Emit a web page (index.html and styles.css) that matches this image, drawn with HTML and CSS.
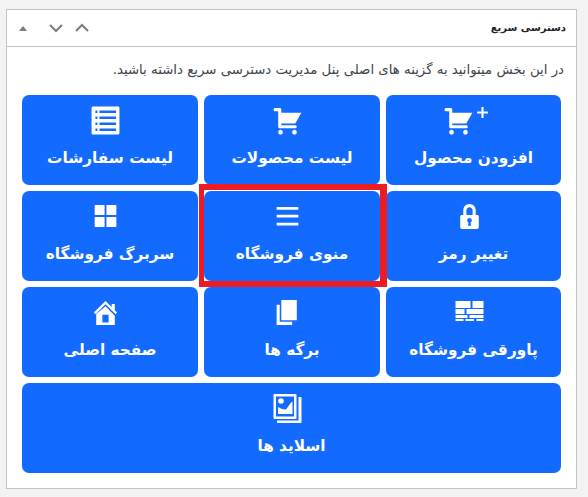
FILE: index.html
```html
<!DOCTYPE html>
<html lang="fa" dir="rtl">
<head>
    <meta charset="UTF-8">
    <meta name="viewport" content="width=device-width, initial-scale=1.0">
    <title>دسترسی سریع</title>
    <link rel="stylesheet" href="styles.css">
</head>
<body>
    <div class="panel">
        <div class="panel-head">
            <h2>دسترسی سریع</h2>
            <div class="handles">
                <svg class="h-up" width="16" height="16" viewBox="0 0 16 16"><path d="M2 11l6-6 6 6" fill="none" stroke="#787c82" stroke-width="2"/></svg>
                <svg class="h-down" width="16" height="16" viewBox="0 0 16 16"><path d="M2 5l6 6 6-6" fill="none" stroke="#787c82" stroke-width="2"/></svg>
                <svg class="h-top" width="10" height="16" viewBox="0 0 10 16"><path d="M1 11l4-5 4 5z" fill="#787c82"/></svg>
            </div>
        </div>
        <div class="panel-body">
            <p class="intro">در این بخش میتوانید به گزینه های اصلی پنل مدیریت دسترسی سریع داشته باشید.</p>
            <div class="links">
                <a class="link-card" href="#">
                    <span class="icon-wrap">
                        <svg class="icon" viewBox="0 0 20 20"><path d="M6 13h9c.55 0 1 .45 1 1s-.45 1-1 1H5c-.55 0-1-.45-1-1V4H2c-.55 0-1-.45-1-1s.45-1 1-1h3c.55 0 1 .45 1 1v2h13l-4 7H6v1zm-.5 3c.83 0 1.5.67 1.5 1.5S6.33 19 5.5 19 4 18.33 4 17.5 4.67 16 5.5 16zm9 0c.83 0 1.5.67 1.5 1.5s-.67 1.5-1.5 1.5-1.5-.67-1.5-1.5.67-1.5 1.5-1.5z"/></svg>
                        <svg class="plus" viewBox="0 0 12 12"><path d="M5 1h2v4h4v2H7v4H5V7H1V5h4z"/></svg>
                    </span>
                    <span class="label">افزودن محصول</span>
                </a>
                <a class="link-card" href="#">
                    <svg class="icon" viewBox="0 0 20 20"><path d="M6 13h9c.55 0 1 .45 1 1s-.45 1-1 1H5c-.55 0-1-.45-1-1V4H2c-.55 0-1-.45-1-1s.45-1 1-1h3c.55 0 1 .45 1 1v2h13l-4 7H6v1zm-.5 3c.83 0 1.5.67 1.5 1.5S6.33 19 5.5 19 4 18.33 4 17.5 4.67 16 5.5 16zm9 0c.83 0 1.5.67 1.5 1.5s-.67 1.5-1.5 1.5-1.5-.67-1.5-1.5.67-1.5 1.5-1.5z"/></svg>
                    <span class="label">لیست محصولات</span>
                </a>
                <a class="link-card" href="#">
                    <svg class="icon" viewBox="0 0 20 20"><path fill-rule="evenodd" d="M2 1h16c.6 0 1 .4 1 1v16c0 .6-.4 1-1 1H2c-.6 0-1-.4-1-1V2c0-.6.4-1 1-1zm1.500 2.500v1.600h1.300V3.500H3.500zm2.600 0v1.600h10.700V3.500H6.100zM3.500 7.400V9h1.300V7.400H3.500zm2.600 0V9h10.700V7.400H6.100zM3.500 11.300v1.600h1.300v-1.600H3.500zm2.600 0v1.600h10.700v-1.600H6.100zM3.500 15.100v1.600h1.300v-1.600H3.500zm2.600 0v1.600h10.700v-1.600H6.100z"/></svg>
                    <span class="label">لیست سفارشات</span>
                </a>
                <a class="link-card" href="#">
                    <svg class="icon" viewBox="0 0 20 20"><path d="M14 9h1c.55 0 1 .45 1 1v7c0 .55-.45 1-1 1H5c-.55 0-1-.45-1-1v-7c0-.55.45-1 1-1h1V6c0-2.210 1.790-4 4-4s4 1.790 4 4v3zm-2 0V6c0-1.100-.9-2-2-2s-2 .9-2 2v3h4zm-1 7l-.36-2.150c.51-.24.86-.75.86-1.350 0-.83-.67-1.500-1.500-1.500s-1.500.67-1.500 1.500c0 .6.35 1.110.86 1.350L9 16h2z"/></svg>
                    <span class="label">تغییر رمز</span>
                </a>
                <a class="link-card is-marked" href="#">
                    <svg class="icon" viewBox="0 0 20 20"><path d="M3 3.800h14v1.800H3zM3 8.900h14v1.800H3zM3 14h14v1.800H3z"/></svg>
                    <span class="label">منوی فروشگاه</span>
                    <i class="marker"></i>
                </a>
                <a class="link-card" href="#">
                    <svg class="icon" viewBox="0 0 20 20"><path d="M3 2.600h6.400V9H3zM10.600 2.600H17V9h-6.400zM3 10.400h6.400v6.400H3zM10.600 10.400H17v6.400h-6.400z"/></svg>
                    <span class="label">سربرگ فروشگاه</span>
                </a>
                <a class="link-card" href="#">
                    <svg class="icon" viewBox="0 0 31 31"><path d="M1.500 4h15v7h-15zM18.500 4h11v7h-11zM1.500 12h9v5h-9zM12.500 12h17v5h-17zM1.500 18h12v3h-12zM15.500 18h14v3h-14zM1.500 22h8v2h-8zM11.500 22H20v2h-8.500zM22.500 22h7v2h-7z"/></svg>
                    <span class="label">پاورقی فروشگاه</span>
                </a>
                <a class="link-card" href="#">
                    <svg class="icon" viewBox="0 0 20 20"><path d="M6 15V2h10v13H6zm-1 1h8v2H3V5h2v11z"/></svg>
                    <span class="label">برگه ها</span>
                </a>
                <a class="link-card" href="#">
                    <svg class="icon" viewBox="0 0 20 20"><path fill-rule="evenodd" d="M16 8.500l1.530 1.530-1.060 1.060L10 4.620l-6.470 6.470-1.060-1.060L10 2.500l4 4v-2h2v4zM10 6.040l6 5.990V18H4v-6.970zM12 16.500v-5H8v5h4z"/></svg>
                    <span class="label">صفحه اصلی</span>
                </a>
                <a class="link-card link-wide" href="#">
                    <svg class="icon" viewBox="0 0 31 31"><path fill-rule="evenodd" d="M2.500 1h21c.6 0 1 .4 1 1v23c0 .6-.4 1-1 1h-21c-.6 0-1-.4-1-1V2c0-.6.4-1 1-1zm1.500 2.500v20h18v-20H4zM6 21v-7l4 2 4 .5 5-7 1.500-1V21H6zm3-15.800a2.800 2.800 0 1 1 0 5.600 2.800 2.800 0 0 1 0-5.600zM26.500 4h2c.6 0 1 .4 1 1v24c0 .6-.4 1-1 1H6c-.6 0-1-.4-1-1v-1.500h21.500V4z"/></svg>
                    <span class="label">اسلاید ها</span>
                </a>
            </div>
        </div>
    </div>
</body>
</html>
```

FILE: styles.css
```css
* { margin: 0; padding: 0; box-sizing: border-box; }
body { background: #f3f3f3; padding: 9px 11px 0 6px; font-family: "DejaVu Sans", sans-serif; }
.panel { background: #fff; border: 1px solid #c3c4c7; height: 480px; }
.panel-head { height: 37px; border-bottom: 1px solid #c3c4c7; display: flex; align-items: center; justify-content: space-between; padding: 0 10px 0 11px; }
.panel-head h2 { font-size: 10px; font-weight: bold; color: #1d2327; margin-bottom: 2px; }
.handles { display: flex; align-items: center; gap: 10px; }
.handles svg { display: block; }
.h-top { margin-right: 10px; }
.panel-body { padding: 14px 15px 0; }
.intro { font-size: 13.3px; line-height: 18px; color: #3c434a; margin: 0 -3px 16px 0; }
.links { display: grid; grid-template-columns: 175px 176px 176px; grid-auto-rows: 90px; gap: 6px; }
.link-card { position: relative; display: flex; flex-direction: column; align-items: center; padding-top: 10px; background: #126aff; border-radius: 7px; color: #fff; font-size: 15.3px; font-weight: bold; text-decoration: none; }
.link-wide { grid-column: 1 / -1; }
.icon { display: block; width: 31px; height: 31px; fill: #fff; margin-right: 9px; }
.icon-wrap { position: relative; display: block; height: 31px; margin-right: 30px; }
.icon-wrap .icon { margin-right: 0; }
.plus { position: absolute; top: 1px; right: -15px; width: 13px; height: 13px; fill: #fff; }
.label { margin-top: 10px; line-height: 24px; }
.marker { position: absolute; top: -7px; right: -7px; bottom: -6px; left: -5px; border: solid #ed1c24; border-width: 6px 7px 6px 5px; pointer-events: none; }
```
